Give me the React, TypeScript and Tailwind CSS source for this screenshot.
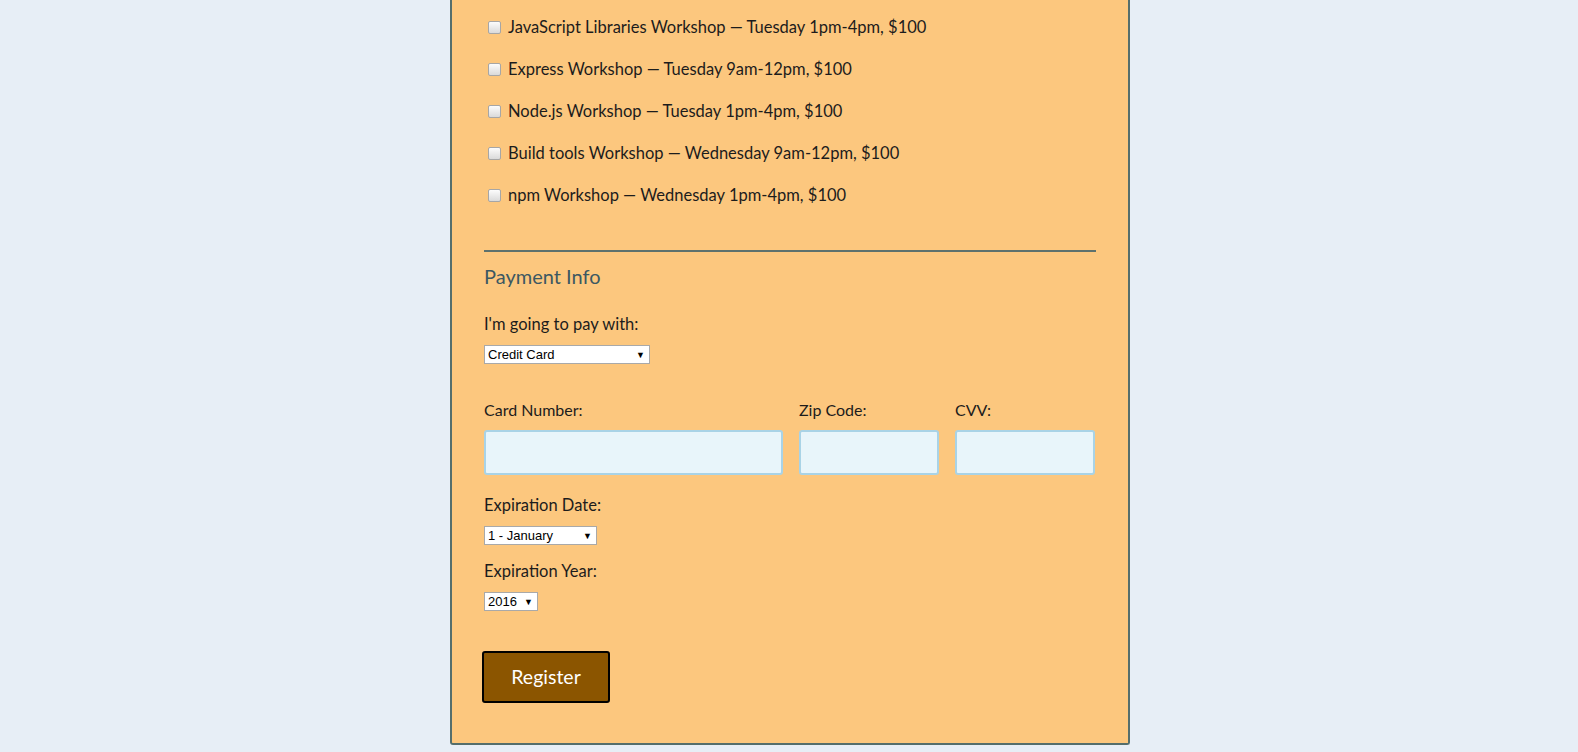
import React from 'react';

const activities = [
  'JavaScript Libraries Workshop — Tuesday 1pm-4pm, $100',
  'Express Workshop — Tuesday 9am-12pm, $100',
  'Node.js Workshop — Tuesday 1pm-4pm, $100',
  'Build tools Workshop — Wednesday 9am-12pm, $100',
  'npm Workshop — Wednesday 1pm-4pm, $100',
];

const Select: React.FC<{ value: string; options: string[]; width: string }> = ({ value, options, width }) => (
  <div className={`relative h-[19px] ${width}`}>
    <select
      defaultValue={value}
      className="block h-full w-full appearance-none rounded-none border border-[#a9a9a9] bg-white pl-[3px] pr-5 pt-[1px] text-[13px] leading-[16px] text-black outline-none"
      style={{ fontFamily: '"Liberation Sans", Arial, sans-serif' }}
    >
      {options.map((o) => (
        <option key={o}>{o}</option>
      ))}
    </select>
    <span className="pointer-events-none absolute right-[5px] top-0 flex h-full items-center text-[9px] text-black">▼</span>
  </div>
);

const TextInput: React.FC<{ width: string }> = ({ width }) => (
  <input
    type="text"
    className={`block h-[45px] ${width} rounded-[3px] border-2 border-[#a9d3e6] bg-[#e8f5fa] px-2 outline-none`}
  />
);

export default function App() {
  return (
    <div
      className="flex h-[752px] w-full flex-col items-center justify-end overflow-hidden bg-[#e7eef6] text-[#1c1c1c]"
      style={{ fontFamily: 'Lato, "Noto Sans", sans-serif' }}
    >
      <form className="mb-[7px] ml-[2px] w-[680px] shrink-0 rounded-b-[3px] border-2 border-t-0 border-[#546e6c] bg-[#fcc77e] px-[32px] pb-[40px] pt-[16px]">
        {/* activities */}
        <div className="flex flex-col gap-[20px]">
          {activities.map((a) => (
            <label key={a} className="flex h-[22px] items-center text-[16.5px] leading-[22px]">
              <input
                type="checkbox"
                className="ml-[4px] mr-[7px] h-[13px] w-[13px] appearance-none rounded-[2px] border border-[#a6a6a6] bg-gradient-to-b from-[#fcfcfc] to-[#dadada]"
              />
              {a}
            </label>
          ))}
        </div>

        <div className="mt-[44px] h-[2px] bg-[#5d716d]" />

        {/* payment */}
        <h2 className="mt-[10px] text-[20px] font-normal leading-[28px] text-[#3c5862]">Payment Info</h2>

        <p className="mt-[23px] text-[16.5px] leading-[22px]">I'm going to pay with:</p>
        <div className="mt-[10px]">
          <Select value="Credit Card" options={['Credit Card', 'PayPal', 'Bitcoin']} width="w-[166px]" />
        </div>

        <div className="mt-[35px] flex gap-[16px]">
          <div className="flex flex-col">
            <span className="text-[16px] leading-[22px]">Card Number:</span>
            <div className="mt-[9px]">
              <TextInput width="w-[299px]" />
            </div>
          </div>
          <div className="flex flex-col">
            <span className="text-[16px] leading-[22px]">Zip Code:</span>
            <div className="mt-[9px]">
              <TextInput width="w-[140px]" />
            </div>
          </div>
          <div className="flex flex-col">
            <span className="text-[16px] leading-[22px]">CVV:</span>
            <div className="mt-[9px]">
              <TextInput width="w-[140px]" />
            </div>
          </div>
        </div>

        <p className="mt-[19px] text-[16.5px] leading-[22px]">Expiration Date:</p>
        <div className="mt-[10px]">
          <Select value="1 - January" options={['1 - January', '2 - February', '3 - March']} width="w-[113px]" />
        </div>

        <p className="mt-[15px] text-[16.5px] leading-[22px]">Expiration Year:</p>
        <div className="mt-[10px]">
          <Select value="2016" options={['2016', '2017', '2018']} width="w-[54px]" />
        </div>

        <button
          type="button"
          className="-ml-[2px] mt-[40px] block h-[52px] w-[128px] rounded-[3px] border-2 border-black bg-[#8b5500] text-[19.5px] text-white"
        >
          Register
        </button>
      </form>
    </div>
  );
}
